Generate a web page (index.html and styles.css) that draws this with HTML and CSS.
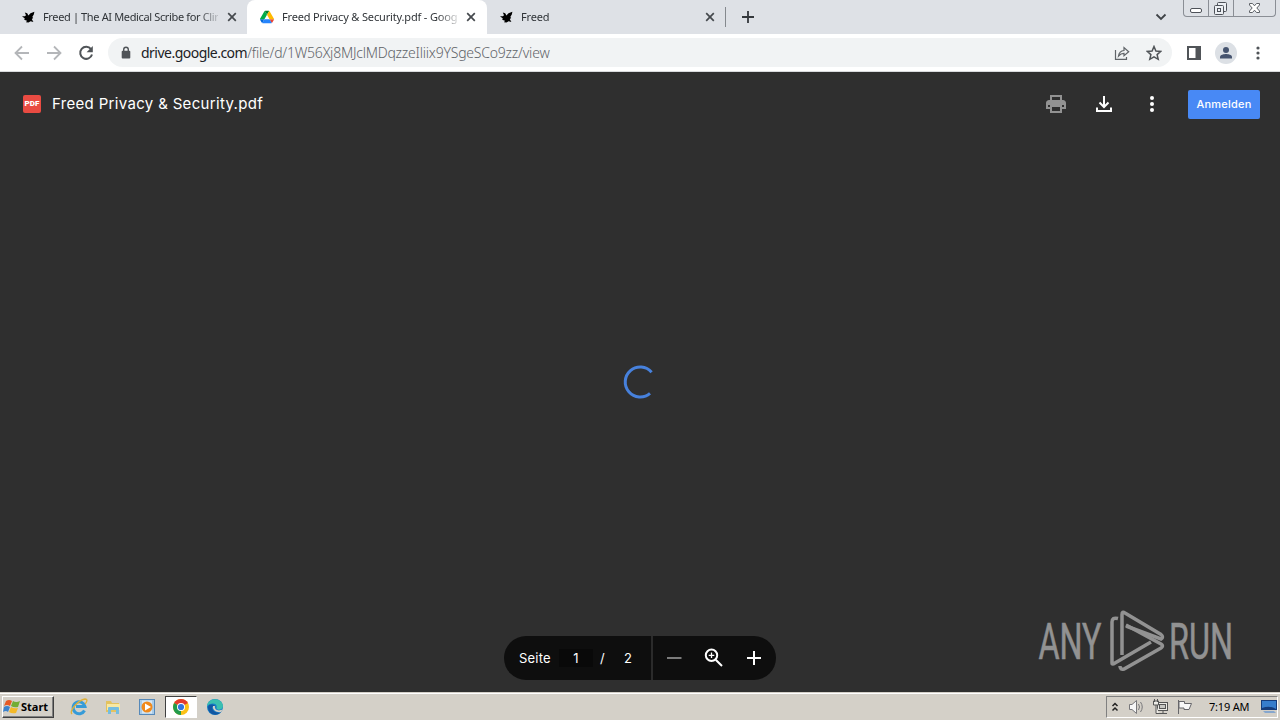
FILE: index.html
```html
<!DOCTYPE html>
<html lang="de">
<head>
    <meta charset="UTF-8">
    <title>Freed Privacy &amp; Security.pdf</title>
    <link rel="stylesheet" href="styles.css">
</head>
<body>
<svg width="0" height="0" class="defs">
    <symbol id="bird" viewBox="0 0 14 14">
        <path d="M3.800 2.400L6.200 3.200L7.400 5.500L9.500 3.200L13.400 1.800L12.800 4.500L11.300 6.900L12.200 8L10.800 9L12.400 11.900L9.600 11.200L7.500 12.600L5 12.200L6 10.700L3.200 9.800L3.800 8.500L1 6.300L3.800 6.200L5 5.200Z"/>
    </symbol>
    <symbol id="close" viewBox="0 0 10 10">
        <path d="M1.200 1.200L8.800 8.800M8.800 1.200L1.200 8.800" stroke="#45494d" stroke-width="1.700"/>
    </symbol>
</svg>
<div id="tabs">
    <div class="tab">
        <svg class="favicon"><use href="#bird"/></svg>
        <span class="tab-title t1">Freed | The AI Medical Scribe for Clin</span>
        <svg class="close"><use href="#close"/></svg>
    </div>
    <div class="tab active">
        <svg class="favicon" viewBox="0 0 87.3 78">
            <path fill="#0066da" d="M6.6 66.85l3.85 6.65c.8 1.4 1.95 2.5 3.3 3.3l13.75-23.8H0c0 1.55.4 3.1 1.2 4.5z"/>
            <path fill="#00ac47" d="M43.65 25L29.9 1.2c-1.35.8-2.5 1.9-3.3 3.3L1.2 48.5A9 9 0 0 0 0 53h27.5z"/>
            <path fill="#ea4335" d="M73.55 76.8c1.35-.8 2.5-1.9 3.3-3.3l1.6-2.75L86.1 57.5c.8-1.4 1.2-2.95 1.2-4.5H59.8l5.85 11.5z"/>
            <path fill="#00832d" d="M43.65 25L57.4 1.2C56.05.4 54.5 0 52.9 0H34.4c-1.6 0-3.15.45-4.5 1.2z"/>
            <path fill="#2684fc" d="M59.8 53H27.5L13.75 76.8c1.35.8 2.9 1.2 4.5 1.2h50.8c1.6 0 3.15-.45 4.5-1.2z"/>
            <path fill="#ffba00" d="M73.4 26.5L60.7 4.5c-.8-1.4-1.95-2.5-3.3-3.3L43.65 25 59.8 53h27.45c0-1.55-.4-3.1-1.2-4.5z"/>
        </svg>
        <span class="tab-title t2">Freed Privacy &amp; Security.pdf - Googl</span>
        <svg class="close"><use href="#close"/></svg>
    </div>
    <div class="tab last">
        <svg class="favicon"><use href="#bird"/></svg>
        <span class="tab-title t3">Freed</span>
        <svg class="close"><use href="#close"/></svg>
    </div>
    <div class="separator"></div>
    <svg class="new-tab" width="12" height="12"><path d="M6 0V12M0 6H12" stroke="#34383c" stroke-width="1.8"/></svg>
    <svg class="chevron" width="12" height="8"><path d="M1.5 1.5L6 6L10.500 1.5" fill="none" stroke="#3f4347" stroke-width="1.800"/></svg>
    <div class="window-buttons">
        <span><svg width="25" height="17"><rect x="6.500" y="8.500" width="11" height="4" rx="1.500" fill="#fff" stroke="#4e5259"/></svg></span>
        <span><svg width="25" height="17" fill="#eceff3" stroke="#4e5259"><rect x="8.500" y="2.500" width="9" height="9" rx="1"/><rect x="5.500" y="5.500" width="9" height="9" rx="1"/><rect x="8.500" y="8.500" width="3" height="3"/></svg></span>
        <span><svg width="42" height="17"><path d="M15.500 3.500h3l2 2.300 2-2.300h3v1.500l-2.700 3 2.700 3v1.500h-3l-2-2.300-2 2.300h-3V11l2.700-3-2.700-3z" fill="#fff" stroke="#5c6066"/></svg></span>
    </div>
</div>
<div id="toolbar">
    <span class="tool"><svg viewBox="0 0 16 16"><path d="M15 8H2M8 1.500L1.500 8L8 14.500" fill="none" stroke="#b4b6b9" stroke-width="1.800"/></svg></span>
    <span class="tool"><svg viewBox="0 0 16 16"><path d="M1 8H14M8 1.500L14.500 8L8 14.500" fill="none" stroke="#b4b6b9" stroke-width="1.800"/></svg></span>
    <span class="tool"><svg viewBox="0 0 16 16"><path d="M13 4.200A6 6 0 1 0 14 9.500" fill="none" stroke="#505458" stroke-width="2"/><path d="M14.800 1V7.200H8.600Z" fill="#505458"/></svg></span>
    <div id="address">
        <svg class="lock" viewBox="0 0 10 13"><path d="M2.700 6V3.500a2.300 2.300 0 0 1 4.600 0V6" fill="none" stroke="#505458" stroke-width="1.400"/><rect x=".7" y="4.800" width="8.600" height="7.700" rx="1" fill="#505458"/></svg>
        <span class="url"><b>drive.google.com</b>/file/d/1W56Xj8MJclMDqzzeIliix9YSgeSCo9zz/view</span>
        <span class="tool"><svg viewBox="0 0 16 16" fill="none" stroke="#606468" stroke-width="1.200"><path d="M1.500 5V14.400H12.500V12M4.500 11C5 7.500 7 5.700 10 5.500V2.600L14.700 6.800L10 10.800V8.300C7.500 8.300 6 9.200 4.500 11Z"/></svg></span>
        <span class="tool"><svg viewBox="0 0 16 16"><path d="M8 1.500L9.900 6L14.800 6.400L11.100 9.600L12.200 14.300L8 11.800L3.800 14.300L4.900 9.600L1.200 6.400L6.100 6Z" fill="none" stroke="#505458" stroke-width="1.500"/></svg></span>
    </div>
    <span class="tool"><svg viewBox="0 0 16 16"><rect x="2" y="2" width="12" height="12" fill="none" stroke="#505458" stroke-width="2"/><path d="M9.500 2H14V14H9.500Z" fill="#505458"/></svg></span>
    <span class="tool"><svg class="avatar" viewBox="0 0 22 22"><circle cx="11" cy="11" r="11" fill="#dce0e5"/><circle cx="11" cy="8" r="3" fill="#46546f"/><path d="M5 16.500V15C5 12.800 9 12 11 12S17 12.800 17 15V16.500Z" fill="#46546f"/></svg></span>
    <span class="tool"><svg viewBox="0 0 16 16" fill="#505458"><circle cx="8" cy="3" r="1.600"/><circle cx="8" cy="8" r="1.600"/><circle cx="8" cy="13" r="1.600"/></svg></span>
</div>
<div id="viewer">
    <div id="header">
        <span class="pdf-icon">PDF</span>
        <span class="file-name">Freed Privacy &amp; Security.pdf</span>
        <div class="actions">
            <svg viewBox="0 0 24 24" fill="#929292"><path d="M19 8h-1V3H6v5H5c-1.660 0-3 1.340-3 3v6h4v4h12v-4h4v-6c0-1.660-1.340-3-3-3zM8 5h8v3H8V5zm8 12v2H8v-4h8v2zm2-2v-2H6v2H4v-4c0-.55.45-1 1-1h14c.55 0 1 .45 1 1v4h-2z"/><path d="M4 10h16v3H4z"/></svg>
            <svg viewBox="0 0 24 24" fill="none" stroke="#fff" stroke-width="2"><path d="M12 4V15M7.500 10.500L12 15L16.500 10.500M5 15.500V19H19V15.500"/></svg>
            <svg viewBox="0 0 24 24" fill="#fff"><circle cx="12" cy="6" r="2"/><circle cx="12" cy="12" r="2"/><circle cx="12" cy="18" r="2"/></svg>
        </div>
        <span class="login">Anmelden</span>
    </div>
    <div id="loading">
        <svg width="36" height="34"><path d="M29.600 7.200A15 15 0 1 0 28 28.400" fill="none" stroke="#4781dc" stroke-width="3"/></svg>
    </div>
    <div id="controls">
        <div class="pages">
            <span>Seite</span><span class="page-input">1</span><span class="slash">/</span><span class="total">2</span>
        </div>
        <div class="zoom">
            <svg viewBox="0 0 24 24"><path d="M5 12H19.500" stroke="#7b7b7b" stroke-width="1.800"/></svg>
            <svg viewBox="0 0 24 24" fill="none" stroke="#fff" stroke-width="2"><circle cx="9.500" cy="9.300" r="5.700"/><path d="M13.700 13.700L20 20"/><path d="M9.500 6.500V12M6.700 9.300H12.300" stroke-width="1.300"/></svg>
            <svg viewBox="0 0 24 24"><path d="M12 5V19M5 12H19" stroke="#fff" stroke-width="2"/></svg>
        </div>
    </div>
    <svg id="watermark" width="210" height="70" viewBox="0 0 210 70">
        <text x="4.500" y="50" textLength="63" lengthAdjust="spacingAndGlyphs">ANY</text>
        <text x="135" y="50" textLength="64" lengthAdjust="spacingAndGlyphs">RUN</text>
        <g fill="none" stroke="#929292" stroke-width="3.500">
            <path d="M88 46V5.500Q88 2 91 4L127 25.500Q130 28 127 30L92 17"/>
            <path d="M84 9.500Q78 8 78 13V54Q78 56 81 54L117 33"/>
            <path d="M92 16L127 35Q130 37 127 39L90 60Q86 61 86 57"/>
        </g>
    </svg>
</div>
<div id="taskbar">
    <div class="start">
        <svg width="18" height="16" viewBox="0 0 18 16"><path d="M3 2Q6 0 9 2L7 7Q4 5 1 7Z" fill="#e65a25"/><path d="M10 2Q13 4 17 2L15 8Q11 9 8 7Z" fill="#72ad35"/><path d="M1 8Q4 6 7 8L5 13Q3 11 0 13Z" fill="#3c82cc"/><path d="M8 8Q11 10 15 9L13 14Q9 15 6 13Z" fill="#f4b928"/></svg>
        <b>Start</b>
    </div>
    <span class="task"><svg viewBox="0 0 18 18"><path d="M14.500 12.500A6 6 0 1 1 15 8.500H6" fill="none" stroke="#369bd8" stroke-width="3"/><path d="M2 16C-1 13 8 2 15 1C18 1 17 4 15 6" fill="none" stroke="#dfb13a" stroke-width="1.400"/></svg></span>
    <span class="task"><svg viewBox="0 0 18 18"><path d="M2 3H7L8 5H15V14H2Z" fill="#e3c25f"/><path d="M3 6H16V12H3Z" fill="#f8e8a2"/><path d="M4 16V10Q4 9 5 9H14Q15 9 15 10V16H12V12H7V16Z" fill="#75bde0"/></svg></span>
    <span class="task"><svg viewBox="0 0 18 18"><rect x="1.500" y="1.500" width="15" height="15" fill="#a9cce8" stroke="#5689b9"/><rect x="4" y="2.500" width="10" height="13" fill="#d6e7f5"/><circle cx="9" cy="9" r="5.500" fill="#f08a1c"/><path d="M7 5.500L13 9L7 12.500Z" fill="#fff"/></svg></span>
    <span class="task running"><svg viewBox="0 0 18 18"><circle cx="9" cy="9" r="8" fill="#fbc116"/><path d="M9 9L2.100 5A8 8 0 0 1 15.900 5Z" fill="#e33b2e"/><path d="M2.100 5L9 9L9 17A8 8 0 0 1 2.100 5Z" fill="#229b4c"/><circle cx="9" cy="9" r="4" fill="#fff"/><circle cx="9" cy="9" r="3.100" fill="#3275df"/></svg></span>
    <span class="task"><svg viewBox="0 0 18 18"><circle cx="9" cy="9" r="8" fill="#167ec6"/><path d="M1 8C2-1 16-1 17 8C17 12 11 13 10.500 10C12 5 5 4 1 8Z" fill="#3bbfb0"/><path d="M6 9C6 13 11 16 15 14C11 19 2 17 2 9C3 6 7 6 9 8Z" fill="#1257a2"/><path d="M9 8C8 12 13 14 17 11L15 14C11 15 6 12 7 8Z" fill="#d4d0c8"/></svg></span>
    <div class="tray">
        <svg width="8" height="12"><path d="M1.500 5L4 2.500L6.500 5M1.500 9.500L4 7L6.500 9.500" fill="none" stroke="#222" stroke-width="1.500"/></svg>
        <svg class="speaker" width="18" height="16" fill="none" stroke="#77777a"><path d="M1.500 5.500H4L8.500 1.500V14.500L4 10.500H1.500Z" fill="#f6f6f6"/><path d="M10.500 5Q12.500 8 10.500 11M12.500 3Q16 8 12.500 13"/></svg>
        <svg width="18" height="16" fill="#ecebe6" stroke="#555"><rect x="5.500" y="3.500" width="10" height="8"/><rect x="7.500" y="5.500" width="6" height="4" fill="#c8c8c4"/><path d="M7 14.500H15M11 12V14M1.500 2V6H6.500V2ZM4 6V14.500H7M2.500 0V3M5.500 0V3"/></svg>
        <svg width="18" height="16" fill="#f8f8f8" stroke="#66666a"><path d="M2.500 1V15"/><path d="M3 2.500H8.500V4.500H15.500L13 10.500H8V9H3Z"/></svg>
        <span class="time">7:19 AM</span>
        <svg width="16" height="15"><path d="M0 1H16V11H0Z" fill="#163c7b"/><path d="M1 2H15V10Q9 6 1 9Z" fill="#377dcc"/><path d="M2 12H13L15 14H4Z" fill="#86a7ce"/></svg>
    </div>
</div>
</body>
</html>
```
FILE: styles.css
```css
* {
    padding: 0;
    margin: 0;
    box-sizing: border-box;
}

body {
    width: 1280px;
    height: 720px;
    overflow: hidden;
    font-family: "Noto Sans", sans-serif;
    display: flex;
    flex-direction: column;
}

svg {
    display: block;
    flex: none;
}

.defs {
    position: absolute;
}

#tabs {
    height: 34px;
    flex: none;
    background: #dee1e6;
    display: flex;
    align-items: center;
    padding-left: 8px;
}

.tab {
    width: 239px;
    height: 34px;
    display: flex;
    align-items: center;
    padding-left: 13px;
}

.active {
    width: 240px;
    background: #ffffff;
    border-radius: 8px 8px 0 0;
}

.last {
    width: 238px;
    padding-left: 12px;
}

.favicon {
    width: 14px;
    height: 14px;
    margin-right: 8px;
}

.tab-title {
    width: 175px;
    font-size: 11px;
    line-height: 18px;
    color: #303438;
    white-space: nowrap;
    overflow: hidden;
    -webkit-mask-image: linear-gradient(90deg, #000 155px, transparent 180px);
}

.t1 {
    letter-spacing: -0.36px;
}

.t2 {
    letter-spacing: -0.16px;
}

.t3 {
    letter-spacing: -0.2px;
}

.close {
    width: 10px;
    height: 10px;
    margin-left: 9px;
}

.separator {
    width: 1px;
    height: 20px;
    background: #85898e;
}

.new-tab {
    margin-left: 16px;
}

.chevron {
    margin-left: auto;
}

.window-buttons {
    width: 93px;
    height: 17px;
    margin: 0 4px 0 16px;
    align-self: flex-start;
    display: flex;
    border: 1px solid #8a8e95;
    border-top: 0;
    border-radius: 0 0 4px 4px;
    overflow: hidden;
}

.window-buttons span {
    width: 25px;
    border-right: 1px solid #8a8e95;
}

.window-buttons span:last-child {
    width: 42px;
    border: 0;
}

#toolbar {
    height: 38px;
    flex: none;
    display: flex;
    align-items: center;
    background: #ffffff;
    border-bottom: 1px solid #d8dadd;
    padding: 0 6px;
}

.tool {
    width: 32px;
    display: flex;
    justify-content: center;
}

.tool svg {
    width: 16px;
    height: 16px;
}

.tool .avatar {
    width: 22px;
    height: 22px;
}

#address {
    width: 1064px;
    height: 29px;
    margin: 0 6px;
    border-radius: 15px;
    background: #f1f3f4;
    display: flex;
    align-items: center;
    padding: 0 2px 0 13px;
}

.lock {
    width: 10px;
    height: 13px;
    margin-right: 10px;
}

.url {
    flex: 1;
    font-size: 14px;
    font-weight: 300;
    line-height: 24px;
    letter-spacing: -0.22px;
    color: #5f6368;
}

.url b {
    font-weight: 400;
    letter-spacing: -0.52px;
    color: #202124;
}

#viewer {
    flex: 1;
    background: #2f2f2f;
    position: relative;
}

#header {
    height: 64px;
    display: flex;
    align-items: center;
    padding: 0 20px 0 23px;
}

.pdf-icon {
    width: 18px;
    height: 18px;
    border-radius: 2px;
    background: #e94b42;
    color: #ffffff;
    font: 900 8px/18px Roboto, sans-serif;
    text-align: center;
}

.file-name {
    margin-left: 11px;
    font: 400 15px/24px Inter, sans-serif;
    letter-spacing: 0.33px;
    color: #ffffff;
}

.actions {
    display: flex;
    gap: 24px;
    margin-left: auto;
}

.actions svg {
    width: 24px;
    height: 24px;
}

.login {
    width: 72px;
    height: 29px;
    margin-left: 24px;
    border-radius: 2px;
    background: #4889f5;
    color: #ffffff;
    font: 500 11px/29px Inter, sans-serif;
    letter-spacing: 0.2px;
    text-align: center;
}

#loading {
    display: flex;
    justify-content: center;
    margin-top: 229px;
}

#controls {
    position: absolute;
    left: 504px;
    bottom: 12px;
    width: 272px;
    height: 44px;
    border-radius: 22px;
    overflow: hidden;
    background: #0e0e0e;
    display: flex;
    color: #ffffff;
    font: 13px Inter, sans-serif;
}

.pages {
    width: 149px;
    border-right: 2px solid #2b2b2b;
    padding-left: 15px;
    display: flex;
    align-items: center;
}

.pages span:first-child {
    width: 33px;
    letter-spacing: 0.2px;
}

.page-input {
    width: 34px;
    height: 18px;
    line-height: 18px;
    margin-left: 7px;
    background: #090909;
    text-align: center;
}

.slash {
    width: 6px;
    margin-left: 7px;
}

.total {
    margin-left: 18px;
}

.zoom {
    display: flex;
    align-items: center;
    gap: 16px;
    padding-left: 9px;
}

.zoom svg {
    width: 24px;
    height: 24px;
}

#watermark {
    position: absolute;
    left: 1034px;
    top: 537px;
}

#watermark text {
    font: 50px Roboto, sans-serif;
    fill: #929292;
    stroke: #929292;
    stroke-width: 0.6px;
}

#taskbar {
    height: 28px;
    flex: none;
    display: flex;
    align-items: center;
    background: #d4d0c8;
    border-top: 1px solid #d4d0c8;
    box-shadow: inset 0 1px #ffffff;
    padding: 1px 2px 1px;
    font-size: 11px;
}

.start {
    width: 52px;
    height: 22px;
    display: flex;
    align-items: center;
    border: 1px solid;
    border-color: #ffffff #404040 #404040 #ffffff;
    box-shadow: inset -1px -1px #808080;
    margin-right: 9px;
    line-height: 18px;
}

.task {
    width: 32px;
    height: 22px;
    margin-right: 2px;
    display: flex;
    align-items: center;
    justify-content: center;
}

.task svg {
    width: 18px;
    height: 18px;
}

.running {
    background: #ffffff;
    border: 1px solid;
    border-color: #404040 #ffffff #ffffff #404040;
}

.tray {
    width: 172px;
    height: 22px;
    margin-left: auto;
    border: 1px solid;
    border-color: #808080 #ffffff #ffffff #808080;
    display: flex;
    align-items: center;
    padding-left: 4px;
    gap: 6px;
}

.speaker {
    margin-left: 3px;
}

.time {
    flex: 1;
    padding-left: 9px;
    letter-spacing: -0.2px;
    white-space: nowrap;
}
```
